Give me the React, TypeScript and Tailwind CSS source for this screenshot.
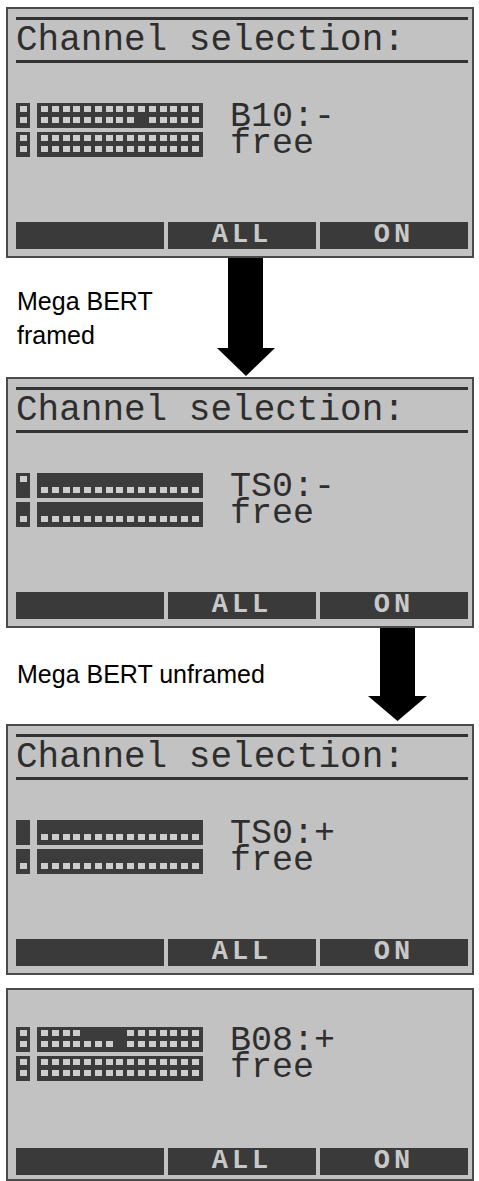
const lcd = { fontFamily: '"Liberation Mono", "DejaVu Sans Mono", monospace' };
const sans = { fontFamily: '"Liberation Sans", Arial, sans-serif' };

type Bar = { top: string; bottom: string };

function Cell({ on }: { on: boolean }) {
  return <div className={`w-[7px] h-[6px] ${on ? "bg-[#cdcdcd]" : "bg-transparent"}`} />;
}

function ChannelBar({ top, bottom }: Bar) {
  const t = top.split("").map((c) => c === "1");
  const b = bottom.split("").map((c) => c === "1");
  return (
    <div className="flex h-[25px] gap-[7px]">
      <div className="w-[14px] h-[25px] bg-[#3c3c3c] flex flex-col items-center pt-[3px] gap-[5px]">
        <Cell on={t[0]} />
        <Cell on={b[0]} />
      </div>
      <div className="w-[166px] h-[25px] bg-[#3c3c3c] flex flex-col px-[4px] pt-[3px] gap-[5px]">
        <div className="flex justify-between">
          {t.slice(1).map((on, i) => (
            <Cell key={i} on={on} />
          ))}
        </div>
        <div className="flex justify-between">
          {b.slice(1).map((on, i) => (
            <Cell key={i} on={on} />
          ))}
        </div>
      </div>
    </div>
  );
}

function SoftKeys() {
  return (
    <div className="grid grid-cols-3 gap-[4px] h-[25px]">
      <div className="bg-[#3a3a3a]" />
      <div className="bg-[#3a3a3a] flex items-center justify-center text-[#c8c8c8] text-[27px] font-bold tracking-[4px] leading-none" style={lcd}>
        ALL
      </div>
      <div className="bg-[#3a3a3a] flex items-center justify-center text-[#c8c8c8] text-[27px] font-bold tracking-[4px] leading-none" style={lcd}>
        ON
      </div>
    </div>
  );
}

function Channels({ bars, label }: { bars: Bar[]; label: string }) {
  return (
    <div className="flex h-[54px]">
      <div className="flex flex-col gap-[4px]">
        {bars.map((b, i) => (
          <ChannelBar key={i} {...b} />
        ))}
      </div>
      <div className="ml-[27px] h-[54px] flex flex-col text-[35px] text-[#2e2e2e] whitespace-pre" style={lcd}>
        <div className="h-[29px] leading-[29px]">{label}</div>
        <div className="h-[25px] leading-[25px]">free</div>
      </div>
    </div>
  );
}

function Screen({ label, bars }: { label: string; bars: Bar[] }) {
  return (
    <div className="ml-[6px] w-[468px] border-2 border-[#4a4a4a] bg-[#c2c2c2] pl-[8px] pr-[4px] pt-[8px] pb-[9px]">
      <div className="h-[3px] bg-[#333333]" />
      <div className="h-[40px] pt-[2px] text-[36px] leading-[38px] text-[#2e2e2e] whitespace-pre" style={lcd}>
        Channel selection:
      </div>
      <div className="h-[3px] bg-[#333333]" />
      <div className="mt-[40px]">
        <Channels bars={bars} label={label} />
      </div>
      <div className="mt-[65px]">
        <SoftKeys />
      </div>
    </div>
  );
}

const full: Bar = { top: "1111111111111111", bottom: "1111111111111111" };
const ts0Free: Bar = { top: "0000000000000000", bottom: "1111111111111111" };

export default function App() {
  return (
    <div className="w-[479px] min-h-[1181px] bg-white pt-[7px]">
      <Screen label="B10:-" bars={[{ top: "1111111111111111", bottom: "1111111111011111" }, full]} />

      <div className="flex h-[119px]">
        <div className="w-[217px] pl-[17px] pt-[26px] text-[25px] leading-[34px] text-black" style={sans}>
          <div>Mega BERT</div>
          <div>framed</div>
        </div>
        <svg width="58" height="119" viewBox="0 0 58 119">
          <rect x="11" y="0" width="35" height="91" fill="#000" />
          <polygon points="0,90 58,90 29,118" fill="#000" />
        </svg>
      </div>

      <Screen label="TS0:-" bars={[{ top: "1000000000000000", bottom: "0111111111111111" }, ts0Free]} />

      <div className="flex h-[96px]">
        <div className="w-[368px] pl-[17px] pt-[29px] text-[25px] leading-[34px] text-black" style={sans}>
          Mega BERT unframed
        </div>
        <svg width="59" height="96" viewBox="0 0 59 96">
          <rect x="12" y="0" width="35" height="69" fill="#000" />
          <polygon points="0,68 59,68 29.5,93" fill="#000" />
        </svg>
      </div>

      <Screen label="TS0:+" bars={[{ top: "0000000000000000", bottom: "0111111111111111" }, ts0Free]} />

      <div className="mt-[13px] ml-[6px] w-[468px] border-2 border-[#4a4a4a] bg-[#c2c2c2] pl-[8px] pr-[4px] pt-[37px] pb-[6px]">
        <Channels bars={[{ top: "1111100001111111", bottom: "1111111101111111" }, full]} label="B08:+" />
        <div className="mt-[67px]">
          <SoftKeys />
        </div>
      </div>
    </div>
  );
}
